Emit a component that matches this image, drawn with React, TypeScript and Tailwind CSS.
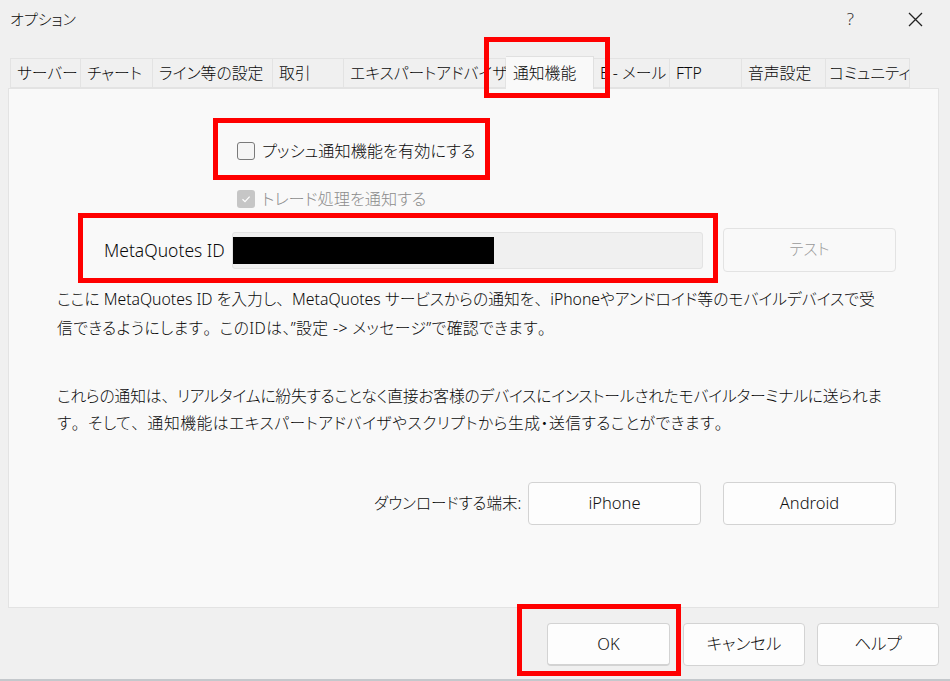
import React from 'react';

const tabs = [
    { label: 'サーバー', w: 'w-[71px]' },
    { label: 'チャート', w: 'w-[72px]' },
    { label: 'ライン等の設定', w: 'w-[120px]' },
    { label: '取引', w: 'w-[71px]' },
    { label: 'エキスパートアドバイザ', w: 'w-[162px]' },
    { label: '通知機能', w: 'w-[88px]', active: true },
    { label: 'E - メール', w: 'w-[76px]' },
    { label: 'FTP', w: 'w-[72px]' },
    { label: '音声設定', w: 'w-[84px]' },
    { label: 'コミュニティ', w: 'w-[84px]' },
];

// keep 、。 full width while kana stay proportional
const jp = (text: string) =>
    text.split(/([、。])/).map((part, i) =>
        part === '、' || part === '。' ? (
            <span key={i} className="[font-feature-settings:normal]">
                {part}
            </span>
        ) : (
            part
        )
    );

const RedBox = ({ className }: { className: string }) => (
    <div className={`absolute border-[5px] border-[#ff0000] pointer-events-none ${className}`} />
);

const Button = ({ label, className = '' }: { label: string; className?: string }) => (
    <button
        className={`h-[43px] rounded-[4px] border border-[#d3d3d3] bg-[#fdfdfd] text-[16.5px] text-[#111] ${className}`}
    >
        {label}
    </button>
);

export default function App() {
    return (
        <div className="relative w-[950px] h-[681px] overflow-hidden bg-[#f0f0f0] font-['Noto_Sans','Noto_Sans_CJK_JP',sans-serif] font-light [font-feature-settings:'palt'] text-[#0a0a0a] border-b-2 border-[#c4c8cc]">
            {/* title bar */}
            <div className="h-[38px] flex items-center px-[10px]">
                <span className="text-[15px]">オプション</span>
                <span className="ml-auto mr-[54px] text-[17px] text-[#333]">?</span>
                <svg width="15" height="15" viewBox="0 0 15 15" className="mr-[17px]">
                    <path d="M1 1 L14 14 M14 1 L1 14" stroke="#222" strokeWidth="1.3" />
                </svg>
            </div>

            {/* tabs */}
            <div className="mt-[17px] h-[33px] flex items-end pl-[10px]">
                {tabs.map((t) =>
                    t.active ? (
                        <div
                            key={t.label}
                            className={`${t.w} h-[33px] -mb-px z-10 bg-[#f9f9f9] border-t border-r border-[#e0e0e0] pl-[7px] pt-[5px] text-[15.8px] whitespace-nowrap`}
                        >
                            {t.label}
                        </div>
                    ) : (
                        <div
                            key={t.label}
                            className={`${t.w} h-[30px] bg-[#f0f0f0] border-t border-r border-b border-[#e3e3e3] first:border-l pl-[6px] last:pl-[3px] pt-[3px] text-[15.8px] whitespace-nowrap`}
                        >
                            {t.label}
                        </div>
                    )
                )}
            </div>

            {/* panel */}
            <div className="ml-[8px] w-[931px] h-[520px] border border-[#e3e3e3] bg-[#f9f9f9]">
                <div className="mt-[52px] ml-[228px] h-[20px] flex items-center gap-[7px]">
                    <div className="w-[18px] h-[18px] rounded-[3px] border border-[#7a7a7a] bg-[#f5f5f5]" />
                    <span className="text-[16.2px]">プッシュ通知機能を有効にする</span>
                </div>
                <div className="mt-[28px] ml-[228px] h-[20px] flex items-center gap-[7px]">
                    <div className="w-[18px] h-[18px] rounded-[3px] bg-[#c6c6c6] flex items-center justify-center">
                        <svg width="10" height="10" viewBox="0 0 10 10">
                            <path d="M1.5 5.2 L4 7.6 L8.6 2.6" stroke="#fff" strokeWidth="1.2" fill="none" />
                        </svg>
                    </div>
                    <span className="text-[16.2px] text-[#8c8c8c]">トレード処理を通知する</span>
                </div>
                <div className="mt-[19px] h-[44px] flex items-center">
                    <span className="ml-[95px] w-[128px] text-[17.5px]">MetaQuotes ID</span>
                    <div className="w-[471px] h-[37px] rounded-[3px] border border-[#e3e3e3] bg-[#f0f0f0] flex items-center">
                        <div className="w-[261px] h-[27px] bg-black" />
                    </div>
                    <button className="ml-[20px] w-[173px] h-[44px] rounded-[4px] border border-[#e3e3e3] bg-[#f9f9f9] text-[15.5px] text-[#9a9a9a]">
                        テスト
                    </button>
                </div>
                <p className="mt-[13px] ml-[48px] text-[15.8px] leading-[29px] whitespace-nowrap">
                    {jp('ここに MetaQuotes ID を入力し、MetaQuotes サービスからの通知を、iPhoneやアンドロイド等のモバイルデバイスで受')}
                    <br />
                    <span className="tracking-[0.4px]">
                        {jp('信できるようにします。このIDは、”設定 -> メッセージ”で確認できます。')}
                    </span>
                </p>
                <p className="mt-[40px] ml-[48px] text-[15.8px] leading-[27px] whitespace-nowrap">
                    <span className="tracking-[-0.2px]">
                        {jp('これらの通知は、リアルタイムに紛失することなく直接お客様のデバイスにインストールされたモバイルターミナルに送られま')}
                    </span>
                    <br />
                    <span className="tracking-[0.5px]">
                        {jp('す。そして、通知機能はエキスパートアドバイザやスクリプトから生成・送信することができます。')}
                    </span>
                </p>
                <div className="mt-[45px] h-[43px] flex items-center">
                    <span className="ml-[365px] w-[154px] text-[15.5px]">ダウンロードする端末:</span>
                    <Button label="iPhone" className="w-[173px]" />
                    <Button label="Android" className="ml-[22px] w-[173px]" />
                </div>
            </div>

            {/* footer */}
            <div className="mt-[15px] flex justify-end pr-[11px]">
                <Button label="OK" className="w-[123px] h-[41px] border-[#3a6e96] border-b-2" />
                <Button label="キャンセル" className="ml-[13px] w-[122px] h-[41px]" />
                <Button label="ヘルプ" className="ml-[12px] w-[122px] h-[41px]" />
            </div>

            {/* annotation boxes */}
            <RedBox className="left-[484px] top-[37px] w-[126px] h-[61px]" />
            <RedBox className="left-[213px] top-[118px] w-[277px] h-[62px]" />
            <RedBox className="left-[78px] top-[213px] w-[640px] h-[70px]" />
            <RedBox className="left-[517px] top-[604px] w-[164px] h-[72px]" />
        </div>
    );
}
